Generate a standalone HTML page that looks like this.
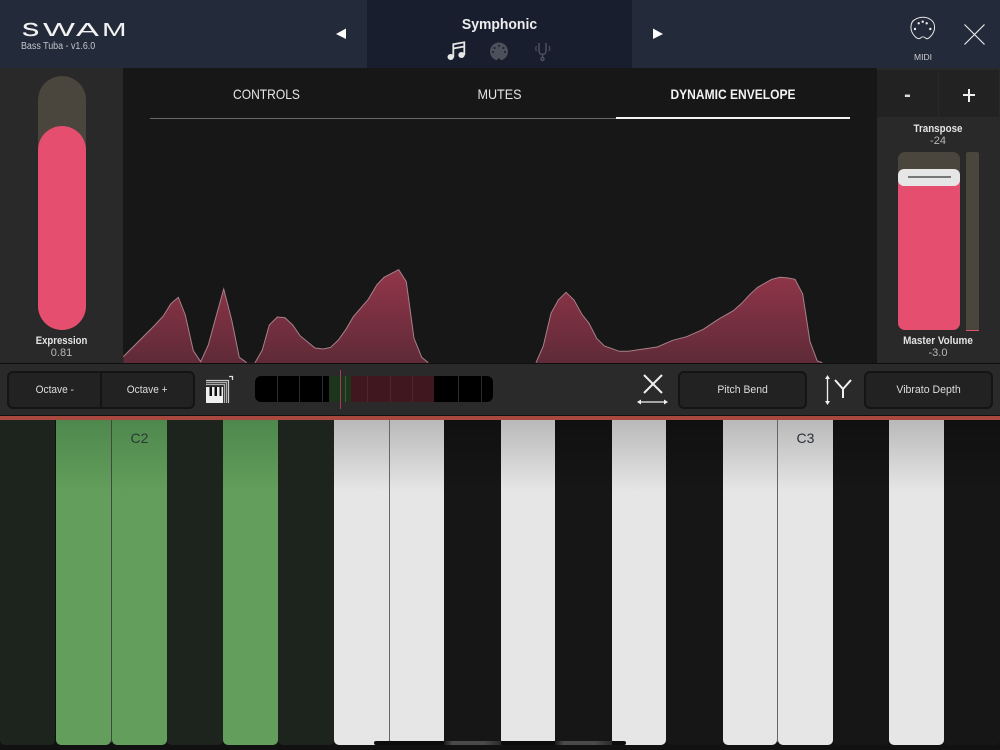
<!DOCTYPE html>
<html><head><meta charset="utf-8"><style>
*{box-sizing:border-box;margin:0;padding:0}
html,body{width:1000px;height:750px;overflow:hidden;background:#111}
body{position:relative;font-family:"Liberation Sans",sans-serif}
.a{position:absolute}
.t{position:absolute;text-align:center;white-space:nowrap}
.btn{position:absolute;background:#222;border:2px solid #141414;border-radius:6px;color:#ddd;font-size:11px;display:flex;align-items:center;justify-content:center}
.btn span{display:inline-block}
.key{position:absolute;top:420px;height:325px;border-radius:0 0 5px 5px}
.w{background:linear-gradient(#b9b9b9 0,#e6e6e6 72px)}
.g{background:linear-gradient(#4e884d 0,#639e5c 72px)}
.d{background:#1d241d}
.b{background:linear-gradient(#101010,#161616 72px)}
.tick{position:absolute;top:0;width:1px;height:26px;background:#2b2b2b}
</style></head><body>
<div class="a" style="left:0;top:0;width:1000px;height:68px;background:#232a39"></div>
<div class="a" style="left:367px;top:0;width:265px;height:68px;background:#181e2e"></div>
<svg class="a" style="left:0;top:0" width="1000" height="68" fill="none">
<g font-family="Liberation Sans" font-size="18" fill="#f2f2f2">
<text x="22" y="36" textLength="17" lengthAdjust="spacingAndGlyphs" stroke="#f2f2f2" stroke-width=".4">S</text>
<text x="43" y="36" textLength="32" lengthAdjust="spacingAndGlyphs">W</text>
<text x="76" y="36" textLength="23" lengthAdjust="spacingAndGlyphs">A</text>
<text x="102" y="36" textLength="24.500" lengthAdjust="spacingAndGlyphs">M</text>
</g>
<path d="M346 28.500V39L336 34Z" fill="#fff"/>
<path d="M653 28.500V39L663 34Z" fill="#fff"/>
<g stroke="#e6e6e6" stroke-width="1.800"><path d="M453.300 57V44.300L464.300 42.300V55"/><path d="M453.300 48.500L464.300 46.500"/></g>
<ellipse cx="450.700" cy="57" rx="3.200" ry="3" fill="#e6e6e6"/><ellipse cx="461.500" cy="55" rx="3.200" ry="3" fill="#e6e6e6"/>
<circle cx="499" cy="51.500" r="9" fill="#4c505b"/>
<g fill="#181e2e"><circle cx="499" cy="46" r="1"/><circle cx="494.500" cy="48" r="1"/><circle cx="503.500" cy="48" r="1"/><circle cx="493" cy="52" r="1"/><circle cx="505" cy="52" r="1"/></g>
<path d="M496.500 60.500L499 58L501.500 60.500Z" fill="#181e2e"/>
<g stroke="#4c505b" stroke-width="1.500"><path d="M539 43V51C539 55.500 546 55.500 546 51V43"/><path d="M542.500 54V58"/><circle cx="542.500" cy="59" r="1.500"/><path d="M536.500 46Q535 48.500 536.500 51M549 46Q550.500 48.500 549 51" stroke-width="1.200"/></g>
<path d="M915.500 37C909 31 910 22 915 19.500C920 16.500 926 16.500 930.500 19.500C935.500 22.500 936.500 31 930 37C928 39 926.500 39 925.500 38C924 36.500 922 36.500 920.500 38C919.500 39 917.500 39 915.500 37Z" stroke="#e8e8e8" stroke-width="1"/>
<g fill="#eee"><circle cx="922.700" cy="21.700" r="1.200"/><circle cx="918.700" cy="23.300" r="1.200"/><circle cx="926.700" cy="23.300" r="1.200"/><circle cx="915" cy="29" r="1.200"/><circle cx="930.300" cy="29" r="1.200"/></g>
<path d="M964.500 24.500L984.500 44.500M984.500 24.500L964.500 44.500" stroke="#e8e8e8" stroke-width="1.200"/>
</svg>
<div class="t" style="left:21px;top:41px;font-size:10px;color:#c4c7cc;transform:scaleX(.89);transform-origin:left">Bass Tuba - v1.6.0</div>
<div class="t" style="left:367px;width:265px;top:16px;font-size:15px;font-weight:bold;color:#eee;transform:scaleX(.93)">Symphonic</div>
<div class="t" style="left:893px;width:60px;top:52px;font-size:8.500px;color:#ccc">MIDI</div>

<div class="a" style="left:0;top:68px;width:123px;height:295px;background:#292929"></div>
<div class="a" style="left:123px;top:68px;width:754px;height:295px;background:#171717"></div>
<div class="a" style="left:877px;top:68px;width:123px;height:295px;background:#292929"></div>

<div class="a" style="left:38px;top:76px;width:48px;height:254px;border-radius:24px;background:#4a463d"></div>
<div class="a" style="left:38px;top:126px;width:48px;height:204px;border-radius:24px;background:#e54e6e"></div>
<div class="t" style="left:0;width:123px;top:335px;font-size:11px;font-weight:bold;color:#e4e4e4;transform:scaleX(.87)">Expression</div>
<div class="t" style="left:0;width:123px;top:347px;font-size:11px;color:#b8b8b8">0.81</div>

<div class="t" style="left:150px;width:233px;top:86px;font-size:14px;color:#e6e6e6;transform:scaleX(.86)">CONTROLS</div>
<div class="t" style="left:383px;width:233px;top:86px;font-size:14px;color:#e6e6e6;transform:scaleX(.9)">MUTES</div>
<div class="t" style="left:616px;width:234px;top:86px;font-size:14px;font-weight:bold;color:#f2f2f2;transform:scaleX(.86)">DYNAMIC ENVELOPE</div>
<div class="a" style="left:150px;top:118px;width:466px;height:1px;background:#6a6a6a"></div>
<div class="a" style="left:616px;top:117px;width:234px;height:2px;background:#f2f2f2"></div>

<svg class="a" style="left:0;top:0" width="1000" height="364" fill="none">
<defs><linearGradient id="e" gradientUnits="userSpaceOnUse" x1="0" y1="270" x2="0" y2="363"><stop offset="0" stop-color="#923649"/><stop offset="1" stop-color="#5f2a38"/></linearGradient></defs>
<path d="M123.300 356.700L155 325L163.300 316L170.700 304L178.300 297.300L185.300 315L193.300 350.700L200.700 361.700L208.300 345L216 316.700L223.700 289L231.700 320L239.300 357.300L246.700 362.700H255L262.300 350L269.300 325L277.300 317L285 317.700L292.700 325L300 335.700L315 348L323.300 349L330.700 347.300L338.300 340L346 329.300L353.300 316.700L368.300 299.300L376.700 285L384 277.300L391.700 273.300L398.700 269.700L406.300 281.700L414 338.300L421.700 357.300L428.300 362.700V363H123.300Z" fill="url(#e)"/>
<path d="M536 362.700L543.300 346L551 313.300L558.300 300L566 292.300L574 300L581.700 314L589 323.300L596.700 338.300L604.300 346L619.300 351.300L628.300 351.300L641.700 349.300L657.300 347L672.700 340.300L686.700 336.700L703.300 329.300L718.300 319.300L733.300 310.700L741.700 303.300L750 294.300L757.700 287.300L771.700 279.300L780 277.300L786.700 277.700L795 279.300L802.700 294L810 341.700L817.300 361L822.300 362.700V363H536Z" fill="url(#e)"/>
<path d="M123.300 356.700L155 325L163.300 316L170.700 304L178.300 297.300L185.300 315L193.300 350.700L200.700 361.700L208.300 345L216 316.700L223.700 289L231.700 320L239.300 357.300L246.700 362.700M255 362.700L262.300 350L269.300 325L277.300 317L285 317.700L292.700 325L300 335.700L315 348L323.300 349L330.700 347.300L338.300 340L346 329.300L353.300 316.700L368.300 299.300L376.700 285L384 277.300L391.700 273.300L398.700 269.700L406.300 281.700L414 338.300L421.700 357.300L428.300 362.700M536 362.700L543.300 346L551 313.300L558.300 300L566 292.300L574 300L581.700 314L589 323.300L596.700 338.300L604.300 346L619.300 351.300L628.300 351.300L641.700 349.300L657.300 347L672.700 340.300L686.700 336.700L703.300 329.300L718.300 319.300L733.300 310.700L741.700 303.300L750 294.300L757.700 287.300L771.700 279.300L780 277.300L786.700 277.700L795 279.300L802.700 294L810 341.700L817.300 361L822.300 362.700" stroke="#a7808a" stroke-width="1"/>
</svg>

<div class="a" style="left:877px;top:70px;width:61px;height:47px;background:#222"></div>
<div class="a" style="left:939px;top:70px;width:60px;height:47px;background:#222"></div>
<div class="t" style="left:877px;width:61px;top:84px;font-size:20px;font-weight:bold;color:#ddd">-</div>
<div class="a" style="left:962.500px;top:93.700px;width:12.500px;height:2.500px;background:#f0f0f0"></div>
<div class="a" style="left:967.500px;top:88.500px;width:2.500px;height:13px;background:#f0f0f0"></div>
<div class="t" style="left:877px;width:122px;top:123px;font-size:11px;font-weight:bold;color:#e4e4e4;transform:scaleX(.89)">Transpose</div>
<div class="t" style="left:877px;width:122px;top:135px;font-size:11px;color:#b8b8b8">-24</div>
<div class="a" style="left:898px;top:152px;width:62px;height:178px;border-radius:7px;background:#4a463d"></div>
<div class="a" style="left:898px;top:177px;width:62px;height:153px;border-radius:0 0 7px 7px;background:#e54e6e"></div>
<div class="a" style="left:898px;top:168.500px;width:62px;height:17.500px;border-radius:6px;background:#e6e6e6"></div>
<div class="a" style="left:908px;top:176px;width:43px;height:2px;background:#777"></div>
<div class="a" style="left:966px;top:152px;width:13px;height:179px;border-radius:2px;background:#4a463d"></div>
<div class="a" style="left:966px;top:329.500px;width:13px;height:1.500px;background:#e54e6e"></div>
<div class="t" style="left:877px;width:122px;top:335px;font-size:11px;font-weight:bold;color:#e4e4e4;transform:scaleX(.9)">Master Volume</div>
<div class="t" style="left:877px;width:122px;top:347px;font-size:11px;color:#b8b8b8">-3.0</div>

<div class="a" style="left:0;top:363px;width:1000px;height:53px;background:#2a2a2a;border-top:1px solid #0e0e0e;border-bottom:1px solid #111"></div>
<div class="btn" style="left:7px;top:371px;width:95px;height:38px;border-radius:6px 0 0 6px;"><span style="transform:scaleX(.92)">Octave -</span></div>
<div class="btn" style="left:100px;top:371px;width:95px;height:38px;border-radius:0 6px 6px 0;"><span style="transform:scaleX(.92)">Octave +</span></div>
<div class="btn" style="left:678px;top:371px;width:129px;height:38px"><span style="transform:scaleX(.95)">Pitch Bend</span></div>
<div class="btn" style="left:864px;top:371px;width:129px;height:38px"><span style="transform:scaleX(.96)">Vibrato Depth</span></div>

<svg class="a" style="left:0;top:363px" width="1000" height="53" fill="none">
<rect x="206" y="24" width="17" height="16" fill="#f0f0f0"/>
<g fill="#111"><rect x="209.500" y="24" width="2.500" height="9"/><rect x="214.500" y="24" width="2.500" height="9"/><rect x="219.500" y="24" width="2" height="9"/></g>
<g stroke="#aaa" stroke-width="1.200"><path d="M206 21.500H224.500V40"/><path d="M206 19.500H226.500V40"/><path d="M206 17.500H228.500V40" stroke="#ccc"/></g>
<path d="M229 13.500H232.500V17" stroke="#ddd" stroke-width="1.300"/>
<path d="M644 12L662 30M662 12L644 30" stroke="#f0f0f0" stroke-width="2"/>
<path d="M639 39H666" stroke="#f0f0f0" stroke-width="1.300"/><path d="M637 39L641 36.500V41.500ZM668 39L664 36.500V41.500Z" fill="#f0f0f0"/>
<path d="M827.500 16V38" stroke="#f0f0f0" stroke-width="1.300"/><path d="M827.500 12L825 16H830ZM827.500 42L825 38H830Z" fill="#f0f0f0"/>
<path d="M835 17L843 26L851 17M843 26V35" stroke="#f0f0f0" stroke-width="2"/>
</svg>

<div class="a" style="left:255px;top:376px;width:238px;height:26px;border-radius:6px;background:#000;overflow:hidden">
<div class="a" style="left:74px;top:0;width:22px;height:26px;background:#1d351d"></div>
<div class="a" style="left:96px;top:0;width:83px;height:26px;background:#40171f"></div>
<div class="tick" style="left:22px"></div><div class="tick" style="left:44px"></div><div class="tick" style="left:67px"></div><div class="tick" style="left:90px;background:#3f5a3f"></div><div class="tick" style="left:112px;background:#4f2630"></div><div class="tick" style="left:135px;background:#4f2630"></div><div class="tick" style="left:157px;background:#4f2630"></div><div class="tick" style="left:203px"></div><div class="tick" style="left:226px"></div>
</div>
<div class="a" style="left:340px;top:370px;width:1px;height:39px;background:#a83a55"></div>

<div class="a" style="left:0;top:416px;width:1000px;height:4px;background:#a8483f"></div>

<div class="key d" style="left:0;width:55px"></div>
<div class="key g" style="left:56px;width:55px"></div>
<div class="key g" style="left:112px;width:55px"></div>
<div class="key d" style="left:167px;width:56px"></div>
<div class="key g" style="left:223px;width:55px"></div>
<div class="key d" style="left:278px;width:56px"></div>
<div class="key w" style="left:334px;width:55px"></div>
<div class="key w" style="left:390px;width:54px"></div>
<div class="key b" style="left:444px;width:57px"></div>
<div class="key w" style="left:501px;width:54px"></div>
<div class="key b" style="left:555px;width:57px"></div>
<div class="key w" style="left:612px;width:54px"></div>
<div class="key b" style="left:666px;width:57px"></div>
<div class="key w" style="left:723px;width:54px"></div>
<div class="key w" style="left:778px;width:55px"></div>
<div class="key b" style="left:833px;width:56px"></div>
<div class="key w" style="left:889px;width:55px"></div>
<div class="key b" style="left:944px;width:56px"></div>
<div class="a" style="left:111px;top:420px;width:1px;height:322px;background:#3c4c3c"></div>
<div class="a" style="left:389px;top:420px;width:1px;height:322px;background:#666"></div>
<div class="a" style="left:777px;top:420px;width:1px;height:322px;background:#666"></div>
<div class="t" style="left:112px;width:55px;top:430px;font-size:14px;color:#2a3a33">C2</div>
<div class="t" style="left:778px;width:55px;top:430px;font-size:14px;color:#2a2f3a">C3</div>
<div class="a" style="left:374px;top:741px;width:252px;height:4px;border-radius:2px;background:#0c0c0c"></div>
<div class="a" style="left:444px;top:741px;width:57px;height:4px;background:linear-gradient(90deg,#1a1a1a,#4a4a4a 15%,#4a4a4a 70%,#2a2a2a)"></div>
<div class="a" style="left:555px;top:741px;width:57px;height:4px;background:linear-gradient(90deg,#1a1a1a,#4a4a4a 15%,#4a4a4a 70%,#2a2a2a)"></div>
</body></html>
